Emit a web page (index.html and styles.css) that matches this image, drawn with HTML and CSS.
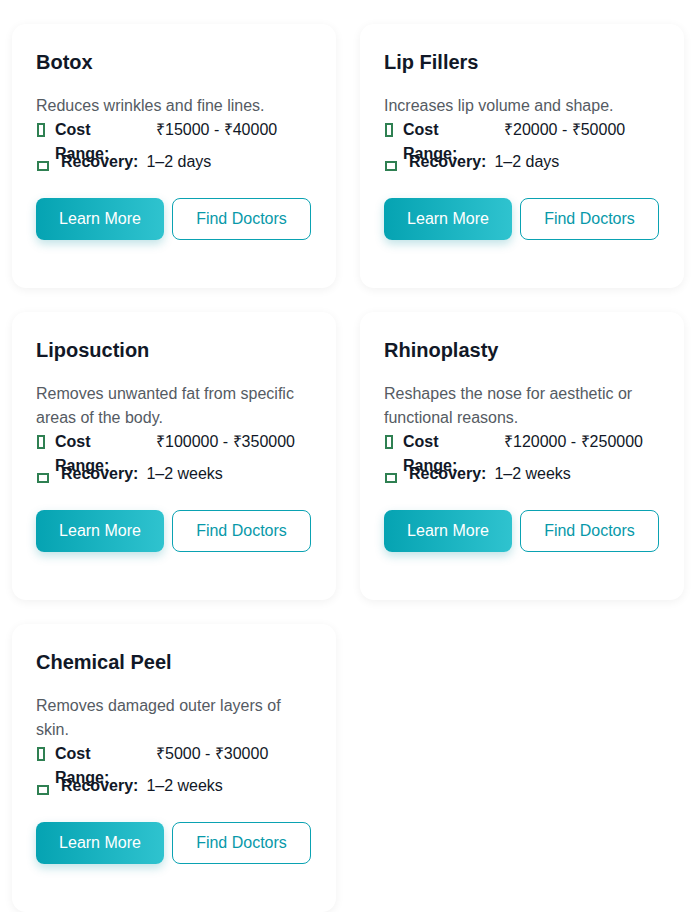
FILE: index.html
```html
<!DOCTYPE html>
<html>
<head>
<meta charset="utf-8">
<link rel="stylesheet" href="styles.css">
</head>
<body>
<div class="grid">
  <div class="card">
    <h3 class="title">Botox</h3>
    <p class="desc">Reduces wrinkles and fine lines.</p>
    <div class="row"><span class="ico ico-tall"></span><strong class="label">Cost Range:</strong><span class="val">₹15000 - ₹40000</span></div>
    <div class="row"><span class="ico ico-sq"></span><strong class="label">Recovery:</strong><span class="val">1–2 days</span></div>
    <div class="actions"><button class="btn btn-primary">Learn More</button><button class="btn btn-outline">Find Doctors</button></div>
  </div>
  <div class="card">
    <h3 class="title">Lip Fillers</h3>
    <p class="desc">Increases lip volume and shape.</p>
    <div class="row"><span class="ico ico-tall"></span><strong class="label">Cost Range:</strong><span class="val">₹20000 - ₹50000</span></div>
    <div class="row"><span class="ico ico-sq"></span><strong class="label">Recovery:</strong><span class="val">1–2 days</span></div>
    <div class="actions"><button class="btn btn-primary">Learn More</button><button class="btn btn-outline">Find Doctors</button></div>
  </div>
  <div class="card">
    <h3 class="title">Liposuction</h3>
    <p class="desc">Removes unwanted fat from specific areas of the body.</p>
    <div class="row"><span class="ico ico-tall"></span><strong class="label">Cost Range:</strong><span class="val">₹100000 - ₹350000</span></div>
    <div class="row"><span class="ico ico-sq"></span><strong class="label">Recovery:</strong><span class="val">1–2 weeks</span></div>
    <div class="actions"><button class="btn btn-primary">Learn More</button><button class="btn btn-outline">Find Doctors</button></div>
  </div>
  <div class="card">
    <h3 class="title">Rhinoplasty</h3>
    <p class="desc">Reshapes the nose for aesthetic or functional reasons.</p>
    <div class="row"><span class="ico ico-tall"></span><strong class="label">Cost Range:</strong><span class="val">₹120000 - ₹250000</span></div>
    <div class="row"><span class="ico ico-sq"></span><strong class="label">Recovery:</strong><span class="val">1–2 weeks</span></div>
    <div class="actions"><button class="btn btn-primary">Learn More</button><button class="btn btn-outline">Find Doctors</button></div>
  </div>
  <div class="card">
    <h3 class="title">Chemical Peel</h3>
    <p class="desc">Removes damaged outer layers of skin.</p>
    <div class="row"><span class="ico ico-tall"></span><strong class="label">Cost Range:</strong><span class="val">₹5000 - ₹30000</span></div>
    <div class="row"><span class="ico ico-sq"></span><strong class="label">Recovery:</strong><span class="val">1–2 weeks</span></div>
    <div class="actions"><button class="btn btn-primary">Learn More</button><button class="btn btn-outline">Find Doctors</button></div>
  </div>
</div>
</body>
</html>
```
FILE: styles.css
```css
html, body {
  margin: 0;
  padding: 0;
  background: #ffffff;
}
body {
  font-family: "Liberation Sans", Arial, sans-serif;
  color: #111827;
}
.grid {
  display: grid;
  grid-template-columns: 324px 324px;
  align-items: start;
  column-gap: 24px;
  row-gap: 24px;
  padding: 24px 12px;
}
.card {
  background: #fff;
  border-radius: 14px;
  box-shadow: 0 2px 10px rgba(0, 0, 0, 0.06);
  padding: 24px 24px 48px;
}
.title {
  margin: 0 0 18px;
  font-size: 20px;
  line-height: 28px;
  font-weight: 700;
  color: #111827;
}
.desc {
  margin: 0;
  font-size: 16px;
  line-height: 24px;
  color: #555b63;
}
.row {
  display: flex;
  align-items: flex-start;
  height: 24px;
  margin-bottom: 8px;
  font-size: 16px;
  line-height: 24px;
  color: #111827;
}
.ico {
  flex: none;
  box-sizing: border-box;
  border: 2px solid #2f8052;
  margin-left: 1px;
}
.ico-tall {
  width: 8px;
  height: 14px;
  margin-top: 5px;
  margin-right: 10px;
}
.ico-sq {
  width: 12px;
  height: 10px;
  margin-top: 11px;
  margin-right: 12px;
}
.label {
  font-weight: 700;
  max-width: 93px;
  margin-right: 8px;
}
.val {
  white-space: nowrap;
}
.actions {
  display: flex;
  gap: 8px;
  margin-top: 24px;
}
.btn {
  font-family: "Liberation Sans", Arial, sans-serif;
  font-size: 16px;
  height: 42px;
  border-radius: 8px;
  cursor: pointer;
  box-sizing: border-box;
}
.btn-primary {
  width: 128px;
  border: none;
  color: #fff;
  background: linear-gradient(90deg, #05a3b2, #2fc3cf);
  box-shadow: 0 4px 10px rgba(8, 145, 160, 0.25);
}
.btn-outline {
  width: 139px;
  background: #fff;
  border: 1px solid #0aa2b2;
  color: #0899a9;
}
```
